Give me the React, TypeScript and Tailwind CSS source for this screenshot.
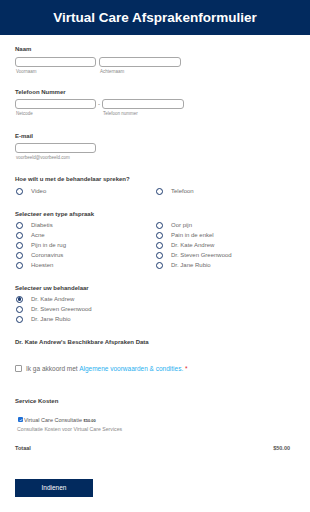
import React from "react";

const typesLeft = ["Diabetis", "Acne", "Pijn in de rug", "Coronavirus", "Hoesten"];
const typesRight = ["Oor pijn", "Pain in de enkel", "Dr. Kate Andrew", "Dr. Steven Greenwood", "Dr. Jane Rubio"];
const doctors = ["Dr. Kate Andrew", "Dr. Steven Greenwood", "Dr. Jane Rubio"];

function Radio({ label, checked = false }: { label: string; checked?: boolean }) {
  return (
    <div className="flex items-center h-[10px]">
      <span className="w-[7px] h-[7px] rounded-full border-[1.2px] border-[#1d3b6f] flex items-center justify-center shrink-0 ml-[1px]">
        {checked && <span className="w-[3.5px] h-[3.5px] rounded-full bg-[#1d3b6f]" />}
      </span>
      <span className="ml-[8px] text-[6px] text-[#6b6b6b]">{label}</span>
    </div>
  );
}

function Label({ children, className = "" }: { children: React.ReactNode; className?: string }) {
  return <div className={`text-[6px] leading-[8px] font-bold text-[#3a3a3a] ${className}`}>{children}</div>;
}

function Input({ w = "w-[81px]" }: { w?: string }) {
  return <div className={`${w} h-[10px] rounded-[3px] border border-[#a8a8a8] bg-white`} />;
}

function Sub({ children }: { children: React.ReactNode }) {
  return <div className="text-[4.5px] leading-[5px] text-[#8a8a8a] mt-[2px] ml-[1px]">{children}</div>;
}

export default function App() {
  return (
    <div className="w-[310px] h-[512px] bg-white overflow-hidden" style={{ fontFamily: '"Liberation Sans", Arial, sans-serif' }}>
      <div className="h-[35px] bg-[#022a5e] flex items-center justify-center">
        <h1 className="text-white font-bold text-[13.5px] leading-none">Virtual Care Afsprakenformulier</h1>
      </div>

      <div className="px-[15px]">
        {/* Naam */}
        <Label className="mt-[10px]">Naam</Label>
        <div className="flex gap-[3px] mt-[4px]">
          <div>
            <Input />
            <Sub>Voornaam</Sub>
          </div>
          <div>
            <Input w="w-[82px]" />
            <Sub>Achternaam</Sub>
          </div>
        </div>

        {/* Telefoon */}
        <Label className="mt-[14px]">Telefoon Nummer</Label>
        <div className="flex mt-[3px]">
          <div>
            <Input />
            <Sub>Netcode</Sub>
          </div>
          <span className="text-[6px] leading-[10px] text-[#555] mx-[2px]">-</span>
          <div>
            <Input w="w-[82px]" />
            <Sub>Telefoon nummer</Sub>
          </div>
        </div>

        {/* E-mail */}
        <Label className="mt-[16px]">E-mail</Label>
        <div className="mt-[3px]">
          <Input />
          <Sub>voorbeeld@voorbeeld.com</Sub>
        </div>

        {/* Spreken */}
        <Label className="mt-[15px]">Hoe wilt u met de behandelaar spreken?</Label>
        <div className="grid grid-cols-2 mt-[3px]">
          <Radio label="Video" />
          <Radio label="Telefoon" />
        </div>

        {/* Type */}
        <Label className="mt-[14px]">Selecteer een type afspraak</Label>
        <div className="grid grid-cols-2 mt-[2px]">
          <div>
            {typesLeft.map((t) => (
              <Radio key={t} label={t} />
            ))}
          </div>
          <div>
            {typesRight.map((t) => (
              <Radio key={t} label={t} />
            ))}
          </div>
        </div>

        {/* Behandelaar */}
        <Label className="mt-[14px]">Selecteer uw behandelaar</Label>
        <div className="mt-[2px]">
          {doctors.map((d, i) => (
            <Radio key={d} label={d} checked={i === 0} />
          ))}
        </div>

        <Label className="mt-[14px]">Dr. Kate Andrew's Beschikbare Afspraken Data</Label>

        {/* Akkoord */}
        <div className="flex items-center mt-[18px]">
          <span className="w-[7px] h-[7px] border border-[#9a9a9a] rounded-[1px] bg-white shrink-0" />
          <span className="ml-[4px] text-[6.5px] text-[#6b6b6b]">
            Ik ga akkoord met <span className="text-[#2bb0ef]">Algemene voorwaarden &amp; condities.</span>{" "}
            <span className="text-[#e0242a]">*</span>
          </span>
        </div>

        {/* Service */}
        <Label className="mt-[23px]">Service Kosten</Label>
        <div className="flex items-center mt-[11px] ml-[3px]">
          <span className="w-[5px] h-[5px] rounded-[1px] bg-[#1f6fd6] flex items-center justify-center shrink-0">
            <svg viewBox="0 0 10 10" className="w-[4px] h-[4px]">
              <path d="M2 5.2 L4.2 7.4 L8 2.8" fill="none" stroke="white" strokeWidth="1.8" />
            </svg>
          </span>
          <span className="ml-[1px] text-[5.5px] text-[#555]">
            Virtual Care Consultatie <span className="font-bold text-[4px] text-[#444]">$50.00</span>
          </span>
        </div>
        <div className="text-[5.2px] text-[#8a8a8a] mt-[2px] ml-[2px]">Consultatie Kosten voor Virtual Care Services</div>

        {/* Totaal */}
        <div className="flex justify-between items-center mt-[10px] pr-[5px]">
          <span className="text-[5.5px] font-bold text-[#444]">Totaal</span>
          <span className="text-[5.5px] font-bold text-[#555]">$50.00</span>
        </div>

        <button className="mt-[27px] w-[78px] h-[18px] bg-[#022a5e] text-white text-[6.5px] flex items-center justify-center">
          Indienen
        </button>
      </div>
    </div>
  );
}
